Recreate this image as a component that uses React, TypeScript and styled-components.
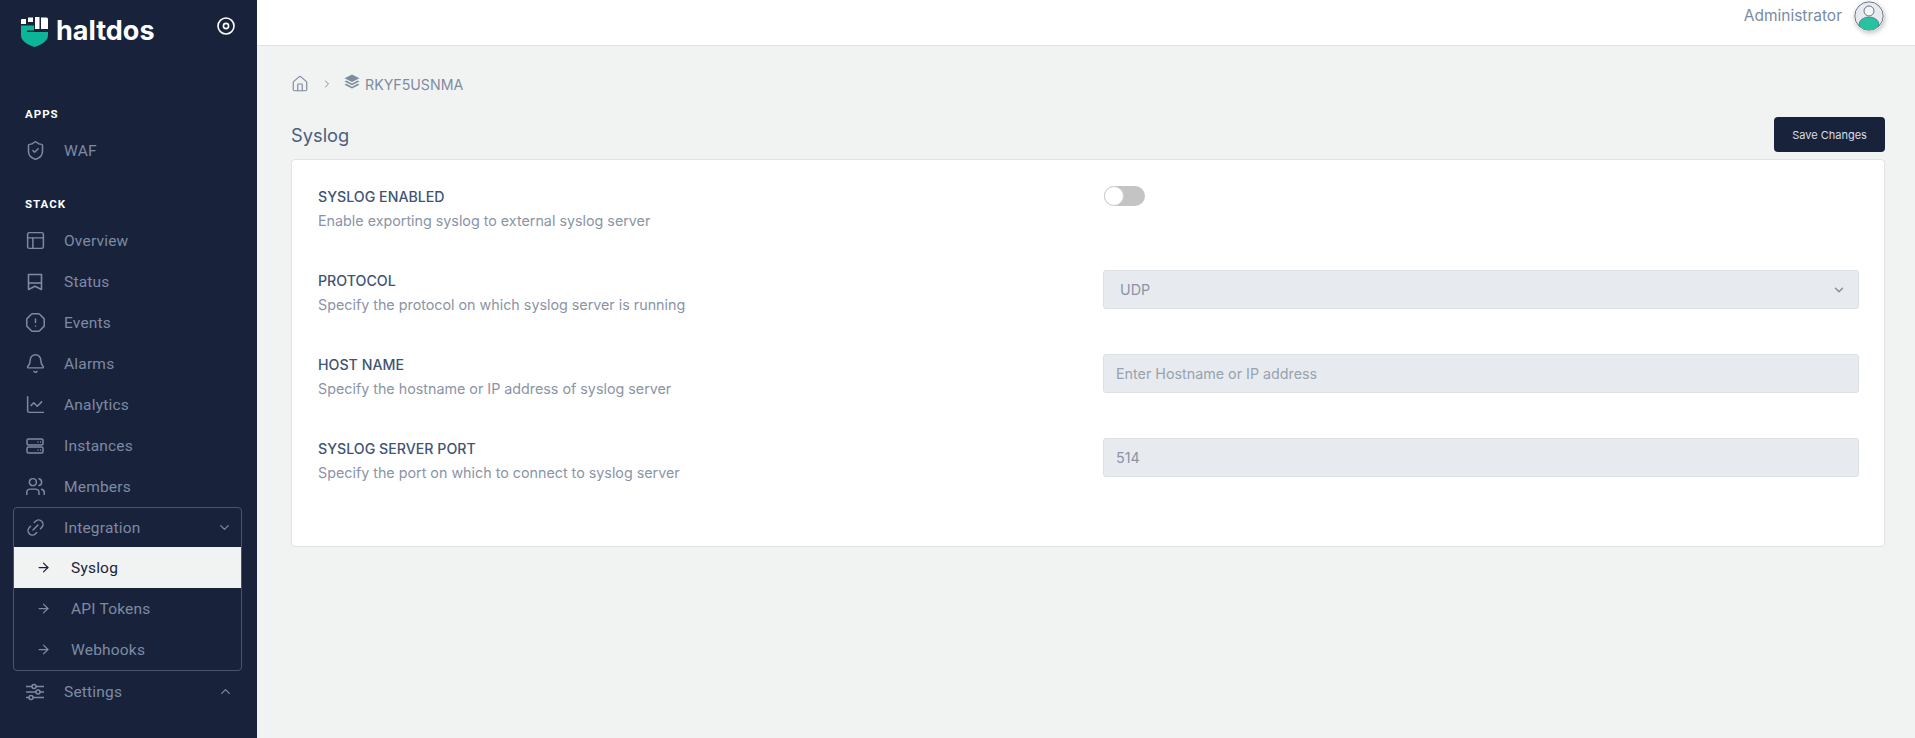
import styled, { createGlobalStyle } from 'styled-components'
import {
  ShieldCheck,
  PanelsTopLeft,
  OctagonAlert,
  Bell,
  ChartLine,
  Users,
  Link2,
  ArrowRight,
  ChevronDown,
  ChevronUp,
  ChevronRight,
  House,
} from 'lucide-react'
import type { ReactNode } from 'react'

const GlobalStyle = createGlobalStyle`
  * { box-sizing: border-box; }
  html, body { margin: 0; height: 100%; }
  body {
    background: #f1f3f3;
    font-family: "Inter", "Noto Sans", sans-serif;
    overflow: hidden;
  }
`

const Shell = styled.div`
  display: flex;
  height: 738px;
`

const Sidebar = styled.aside`
  width: 257px;
  flex-shrink: 0;
  background: #18233b;
  font-family: "Roboto", "Noto Sans", sans-serif;
  overflow: hidden;
`

const Brand = styled.div`
  height: 101px;
  padding: 17px 22px 0 21px;
  display: flex;
  align-items: flex-start;
  justify-content: space-between;
`

const BrandMark = styled.div`
  display: flex;
  align-items: flex-start;
  gap: 8px;
`

const BrandName = styled.span`
  color: #fff;
  font-family: "Inter", sans-serif;
  font-size: 27px;
  line-height: 28px;
  font-weight: 700;
`

const SectionLabel = styled.div`
  height: 26px;
  line-height: 26px;
  padding-left: 25px;
  margin-bottom: 3px;
  color: #fff;
  font-size: 11.5px;
  font-weight: 700;
  letter-spacing: 1px;
`

const Section = styled.section`
  margin-bottom: 20px;
`

const IconSlot = styled.span`
  display: flex;
  justify-content: center;
  width: 18px;
  flex-shrink: 0;
  svg { flex-shrink: 0; }
`

const NavRow = styled.div<{ $active?: boolean; $height?: number }>`
  display: flex;
  align-items: center;
  height: ${(p) => p.$height ?? 41}px;
  padding: 0 24px 0 26px;
  gap: 20px;
  font-size: 15.5px;
  letter-spacing: 0.2px;
  color: ${(p) => (p.$active ? '#18233b' : '#7e8aa3')};
  background: ${(p) => (p.$active ? '#f1f3f3' : 'transparent')};
`

const NavText = styled.span`
  flex: 1;
`

const Group = styled.div`
  margin: 0 15px 0 13px;
  border: 1px solid #49536a;
  border-radius: 4px;
  overflow: hidden;
`

const GroupHead = styled(NavRow)`
  padding-left: 12px;
  padding-right: 9px;
  gap: 20px;
`

const SubRow = styled(NavRow)`
  padding-left: 23px;
  gap: 21px;
`

const SubArrow = styled.span`
  display: flex;
  justify-content: center;
  width: 13px;
  svg { flex-shrink: 0; }
`

const Content = styled.div`
  flex: 1;
  min-width: 0;
`

const TopBar = styled.header`
  height: 46px;
  background: #fff;
  border-bottom: 1px solid #dfe3e3;
  display: flex;
  justify-content: flex-end;
  align-items: flex-start;
  padding: 1px 31px 0 0;
  gap: 12px;
`

const UserName = styled.span`
  color: #7a8ba3;
  font-size: 15.5px;
  line-height: 30px;
`

const Avatar = styled.div`
  width: 30px;
  height: 30px;
  border-radius: 50%;
  box-shadow: 1px 2px 5px rgba(0, 0, 0, 0.25);
`

const Main = styled.main`
  padding: 28px 30px 0 34px;
`

const Crumbs = styled.nav`
  display: flex;
  align-items: center;
  height: 20px;
  color: #7f8c9f;
  font-size: 14.2px;
`

const CrumbSep = styled.span`
  display: flex;
  margin: 0 11px 0 12px;
`

const CrumbName = styled.span`
  display: flex;
  align-items: center;
  gap: 5px;
  svg { margin-top: -4px; }
`

const TitleRow = styled.div`
  display: flex;
  justify-content: space-between;
  align-items: flex-end;
  margin-top: 23px;
  margin-bottom: 7px;
`

const Title = styled.h1`
  margin: 0 0 3px;
  color: #4a5f7e;
  font-size: 18.3px;
  line-height: 28px;
  font-weight: 400;
`

const SaveButton = styled.button`
  width: 111px;
  height: 35px;
  border: 0;
  border-radius: 4px;
  background: #18233b;
  color: #d9dee6;
  font-family: inherit;
  font-size: 11px;
`

const Card = styled.div`
  height: 388px;
  background: #fff;
  border: 1px solid #dfe3e3;
  border-radius: 4px;
  padding: 26px 25px 0 26px;
`

const FieldRow = styled.div`
  display: grid;
  grid-template-columns: 755px 1fr;
  column-gap: 30px;
  height: 84px;
`

const FieldLabel = styled.div`
  color: #3f5573;
  font-size: 14.2px;
  line-height: 22px;
  font-weight: 500;
  text-transform: uppercase;
`

const FieldHelp = styled.div`
  margin-top: 2px;
  color: #8a94a6;
  font-size: 14.3px;
  line-height: 22px;
`

const Toggle = styled.div`
  position: relative;
  width: 41px;
  height: 20px;
  margin-left: 1px;
  border-radius: 10px;
  background: #c4c4c4;
`

const ToggleKnob = styled.span`
  position: absolute;
  left: 0;
  top: 0;
  width: 20px;
  height: 20px;
  border-radius: 50%;
  background: #fff;
  border: 1px solid #cfcfcf;
`

const Field = styled.div<{ $placeholder?: boolean; $select?: boolean }>`
  height: 39px;
  background: #e7ebef;
  border: 1px solid #dbe0e4;
  border-radius: 3px;
  padding: 0 12px 0 ${(p) => (p.$select ? 16 : 12)}px;
  display: flex;
  align-items: center;
  justify-content: space-between;
  color: ${(p) => (p.$placeholder ? '#98a2b0' : '#8a94a6')};
  font-size: 14.3px;
`

const StatusIcon = () => (
  <svg width="18" height="18" viewBox="0 0 18 18" fill="none" stroke="currentColor" strokeWidth="1.6">
    <path d="M2.500 1.500h13v15L9 13.200 2.500 16.500z" strokeLinejoin="round" />
    <path d="M2.500 10h13" />
  </svg>
)

const ServerIcon = () => (
  <svg width="18" height="18" viewBox="0 0 18 18" fill="none" stroke="currentColor" strokeWidth="1.5">
    <rect x="1" y="2" width="16" height="6" rx="1.500" />
    <rect x="1" y="10" width="16" height="6" rx="1.500" />
    <path d="M11.500 5h1M14 5h1M11.500 13h1M14 13h1" />
  </svg>
)

const SlidersIcon = () => (
  <svg width="18" height="18" viewBox="0 0 18 18" fill="none" stroke="currentColor" strokeWidth="1.5">
    <path d="M0 3.500h6M10 3.500h8M0 9h10M14 9h4M0 14.500h3M7 14.500h11" />
    <circle cx="8" cy="3.500" r="2" />
    <circle cx="12" cy="9" r="2" />
    <circle cx="5" cy="14.500" r="2" />
  </svg>
)

const TargetIcon = () => (
  <svg width="18" height="18" viewBox="0 0 18 18" fill="none" stroke="#fff">
    <circle cx="9" cy="9" r="8" strokeWidth="1.6" />
    <circle cx="9" cy="9" r="2.600" strokeWidth="1.6" />
  </svg>
)

const LogoMark = () => (
  <svg width="27" height="30" viewBox="0 0 27 30">
    <path d="M0 8.500h13v5H6v1.500h21v3c0 6-6 9.500-13.500 12C6 27.500 0 24 0 18z" fill="#0cb597" />
    <path d="M0 3q0-1 1-1h4v5H0zM7 .5h5v4.500H7zM14 0h4.500v12H14zM20 .5h5.500q1.500 0 1.500 1.500v10h-7z" fill="#fff" />
  </svg>
)

const LayersIcon = () => (
  <svg width="16" height="16" viewBox="0 0 16 16" fill="currentColor">
    <path d="M8 .5 15.500 4.300 8 8.100.5 4.300z" />
    <path d="M2.300 6.600.5 7.500 8 11.300l7.500-3.800-1.800-.9L8 9.500z" />
    <path d="M2.300 9.800.5 10.700 8 14.500l7.500-3.800-1.800-.9L8 12.700z" />
  </svg>
)

const UserAvatar = () => (
  <svg width="30" height="30" viewBox="0 0 30 30">
    <defs>
      <clipPath id="avatar-clip">
        <circle cx="15" cy="15" r="14" />
      </clipPath>
    </defs>
    <circle cx="15" cy="15" r="14.200" fill="#e7ebef" stroke="#5c6678" strokeWidth="0.9" />
    <circle cx="15" cy="10" r="5" fill="#f4f6f7" stroke="#5c6678" strokeWidth="0.9" />
    <ellipse cx="15" cy="23.500" rx="10" ry="7.500" fill="#27c2a0" stroke="#5c6678" strokeWidth="0.7" clipPath="url(#avatar-clip)" />
  </svg>
)

type NavItem = { label: string; icon: ReactNode }

const navIcon = { size: 21, strokeWidth: 1.7 }

const stackItems: NavItem[] = [
  { label: 'Overview', icon: <PanelsTopLeft {...navIcon} /> },
  { label: 'Status', icon: <StatusIcon /> },
  { label: 'Events', icon: <OctagonAlert {...navIcon} /> },
  { label: 'Alarms', icon: <Bell {...navIcon} /> },
  { label: 'Analytics', icon: <ChartLine {...navIcon} /> },
  { label: 'Instances', icon: <ServerIcon /> },
  { label: 'Members', icon: <Users {...navIcon} /> },
]

const integrationItems = ['Syslog', 'API Tokens', 'Webhooks']

const fields = [
  { label: 'Protocol', help: 'Specify the protocol on which syslog server is running', value: 'UDP', select: true },
  { label: 'Host Name', help: 'Specify the hostname or IP address of syslog server', value: 'Enter Hostname or IP address', placeholder: true },
  { label: 'Syslog Server Port', help: 'Specify the port on which to connect to syslog server', value: '514' },
]

const App = () => (
  <Shell>
    <GlobalStyle />
    <Sidebar>
      <Brand>
        <BrandMark>
          <LogoMark />
          <BrandName>haltdos</BrandName>
        </BrandMark>
        <TargetIcon />
      </Brand>
      <Section>
        <SectionLabel>APPS</SectionLabel>
        <NavRow>
          <IconSlot>
            <ShieldCheck {...navIcon} />
          </IconSlot>
          <NavText>WAF</NavText>
        </NavRow>
      </Section>
      <SectionLabel>STACK</SectionLabel>
      {stackItems.map((item) => (
        <NavRow key={item.label}>
          <IconSlot>{item.icon}</IconSlot>
          <NavText>{item.label}</NavText>
        </NavRow>
      ))}
      <Group>
        <GroupHead $height={39}>
          <IconSlot>
            <Link2 {...navIcon} style={{ transform: 'rotate(-45deg)' }} />
          </IconSlot>
          <NavText>Integration</NavText>
          <ChevronDown size={15} strokeWidth={2} />
        </GroupHead>
        {integrationItems.map((name, i) => (
          <SubRow key={name} $active={i === 0}>
            <SubArrow>
              <ArrowRight size={15} strokeWidth={2} />
            </SubArrow>
            <NavText>{name}</NavText>
          </SubRow>
        ))}
      </Group>
      <NavRow>
        <IconSlot>
          <SlidersIcon />
        </IconSlot>
        <NavText>Settings</NavText>
        <ChevronUp size={15} strokeWidth={2} />
      </NavRow>
    </Sidebar>
    <Content>
      <TopBar>
        <UserName>Administrator</UserName>
        <Avatar>
          <UserAvatar />
        </Avatar>
      </TopBar>
      <Main>
        <Crumbs>
          <House size={18} strokeWidth={1.6} />
          <CrumbSep>
            <ChevronRight size={12} />
          </CrumbSep>
          <CrumbName>
            <LayersIcon />
            RKYF5USNMA
          </CrumbName>
        </Crumbs>
        <TitleRow>
          <Title>Syslog</Title>
          <SaveButton>Save Changes</SaveButton>
        </TitleRow>
        <Card>
          <FieldRow>
            <div>
              <FieldLabel>Syslog Enabled</FieldLabel>
              <FieldHelp>Enable exporting syslog to external syslog server</FieldHelp>
            </div>
            <div>
              <Toggle>
                <ToggleKnob />
              </Toggle>
            </div>
          </FieldRow>
          {fields.map((f) => (
            <FieldRow key={f.label}>
              <div>
                <FieldLabel>{f.label}</FieldLabel>
                <FieldHelp>{f.help}</FieldHelp>
              </div>
              <Field $placeholder={f.placeholder} $select={f.select}>
                {f.value}
                {f.select && <ChevronDown size={14} strokeWidth={2.6} color="#8a9099" />}
              </Field>
            </FieldRow>
          ))}
        </Card>
      </Main>
    </Content>
  </Shell>
)

export default App
